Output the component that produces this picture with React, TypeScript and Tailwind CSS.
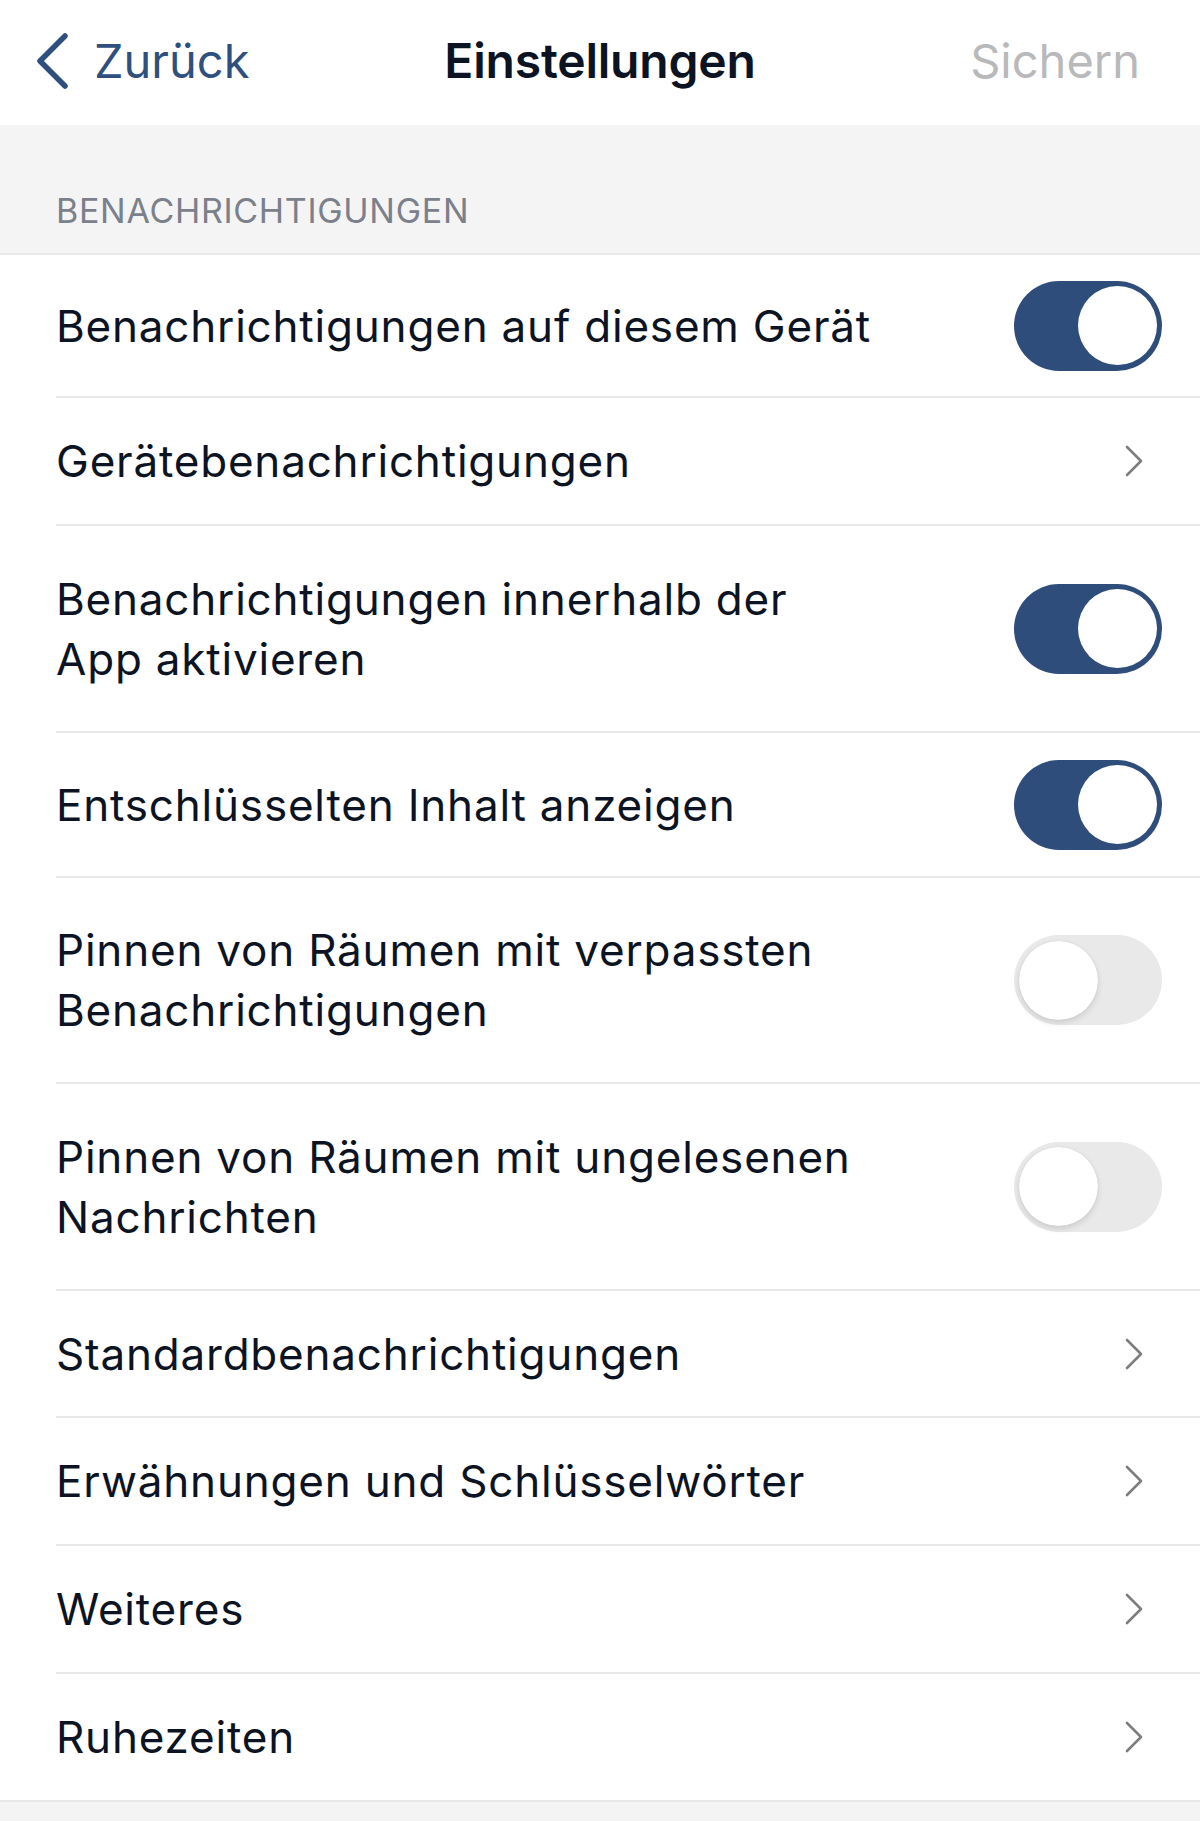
import React from "react";

type Row =
  | { label: string[]; kind: "toggle"; on: boolean; h: string }
  | { label: string[]; kind: "link"; h: string };

const rows: Row[] = [
  { label: ["Benachrichtigungen auf diesem Gerät"], kind: "toggle", on: true, h: "h-[143px]" },
  { label: ["Gerätebenachrichtigungen"], kind: "link", h: "h-[128px]" },
  { label: ["Benachrichtigungen innerhalb der", "App aktivieren"], kind: "toggle", on: true, h: "h-[207px]" },
  { label: ["Entschlüsselten Inhalt anzeigen"], kind: "toggle", on: true, h: "h-[145px]" },
  { label: ["Pinnen von Räumen mit verpassten", "Benachrichtigungen"], kind: "toggle", on: false, h: "h-[206px]" },
  { label: ["Pinnen von Räumen mit ungelesenen", "Nachrichten"], kind: "toggle", on: false, h: "h-[207px]" },
  { label: ["Standardbenachrichtigungen"], kind: "link", h: "h-[127px]" },
  { label: ["Erwähnungen und Schlüsselwörter"], kind: "link", h: "h-[128px]" },
  { label: ["Weiteres"], kind: "link", h: "h-[128px]" },
  { label: ["Ruhezeiten"], kind: "link", h: "h-[126px]" },
];

function Toggle({ on }: { on: boolean }) {
  if (on) {
    return (
      <div className="w-[148px] h-[90px] rounded-full bg-[#2f4d7b] flex items-center justify-end pr-[5px]">
        <div className="w-[79px] h-[79px] rounded-full bg-white" />
      </div>
    );
  }
  return (
    <div className="w-[148px] h-[90px] rounded-full bg-[#e9e9ea] flex items-center justify-start pl-[5px]">
      <div className="w-[79px] h-[79px] rounded-full bg-white shadow-[0_3px_6px_rgba(0,0,0,0.12),0_0_1px_rgba(0,0,0,0.15)]" />
    </div>
  );
}

function Chevron() {
  return (
    <svg width="20" height="32" viewBox="0 0 20 32" fill="none" className="mr-[56px]">
      <path d="M3 2 L17 16 L3 30" stroke="#7d7d80" strokeWidth="2.6" strokeLinecap="round" strokeLinejoin="round" />
    </svg>
  );
}

export default function App() {
  return (
    <div
      className="w-[1200px] min-h-[1821px] bg-[#f4f4f5] text-[#0c1322]"
      style={{ fontFamily: "Inter, 'Noto Sans', sans-serif" }}
    >
      <header className="h-[125px] pb-[4px] bg-white grid grid-cols-[1fr_auto_1fr] items-center">
        <div className="flex items-center pl-[36px]">
          <svg width="34" height="56" viewBox="0 0 34 56" fill="none">
            <path d="M29 3 L4 28 L29 53" stroke="#2f4f7f" strokeWidth="5.5" strokeLinecap="round" strokeLinejoin="round" />
          </svg>
          <span className="ml-[24px] text-[47px] leading-none text-[#2f4f7f]">Zurück</span>
        </div>
        <div className="text-[48px] font-semibold leading-none tracking-[-0.2px]">Einstellungen</div>
        <div className="flex justify-end pr-[60px]">
          <span className="text-[47px] leading-none text-[#b9b9bb]">Sichern</span>
        </div>
      </header>

      <div className="h-[128px] flex items-end pb-[25px] pl-[56px]">
        <span className="text-[34px] leading-none text-[#7b808b] tracking-[0.7px]">BENACHRICHTIGUNGEN</span>
      </div>

      <div className="bg-white border-t-2 border-b-2 border-[#e8e8e9]">
        {rows.map((r, i) => (
          <div key={i} className={`${r.h} pl-[56px]`}>
            <div
              className={`h-full flex items-center justify-between ${
                i < rows.length - 1 ? "border-b-2 border-[#e8e8e9]" : ""
              }`}
            >
              <div className="text-[44px] leading-[60px] tracking-[0.8px]">
                {r.label.map((l, j) => (
                  <div key={j}>{l}</div>
                ))}
              </div>
              {r.kind === "toggle" ? (
                <div className="mr-[38px]">
                  <Toggle on={r.on} />
                </div>
              ) : (
                <Chevron />
              )}
            </div>
          </div>
        ))}
      </div>
    </div>
  );
}
